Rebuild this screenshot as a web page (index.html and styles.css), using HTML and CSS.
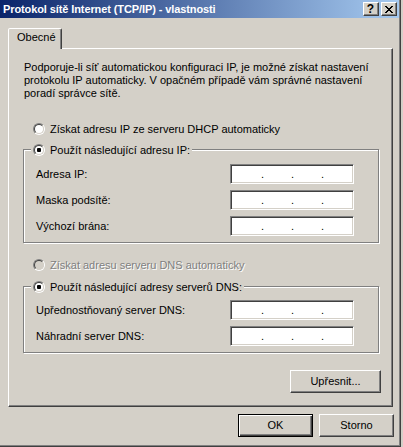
FILE: index.html
```html
<!DOCTYPE html>
<html>
<head>
<meta charset="utf-8">
<link rel="stylesheet" href="styles.css">
</head>
<body>
<div class="window">
  <div class="titlebar">
    <span class="title">Protokol sítě Internet (TCP/IP) - vlastnosti</span>
    <div class="tbuttons">
      <span class="tbtn help">?</span>
      <span class="tbtn close"><svg width="8" height="7" viewBox="0 0 8 7"><path d="M0 0h2v1H0zM6 0h2v1H6zM1 1h2v1H1zM5 1h2v1H5zM2 2h4v1H2zM3 3h2v1H3zM2 4h4v1H2zM1 5h2v1H1zM5 5h2v1H5zM0 6h2v1H0zM6 6h2v1H6z" fill="#000"/></svg></span>
    </div>
  </div>
  <div class="tabs"><div class="tab">Obecné</div></div>
  <div class="panel">
    <p class="intro">Podporuje-li síť automatickou konfiguraci IP, je možné získat nastavení<br>protokolu IP automaticky. V opačném případě vám správné nastavení<br>poradí správce sítě.</p>
    <div class="option opt-dhcp"><span class="radio"><span class="radio-in"></span></span><span>Získat adresu IP ze serveru DHCP automaticky</span></div>
    <div class="group group-ip">
      <div class="legend"><span class="radio checked"><span class="radio-in"></span></span><span>Použít následující adresu IP:</span></div>
      <div class="fields fields-ip">
        <span class="label">Adresa IP:</span>
        <div class="ip"><span class="seg s1"></span><span class="dot">.</span><span class="seg"></span><span class="dot">.</span><span class="seg"></span><span class="dot">.</span><span class="seg"></span></div>
        <span class="label">Maska podsítě:</span>
        <div class="ip"><span class="seg s1"></span><span class="dot">.</span><span class="seg"></span><span class="dot">.</span><span class="seg"></span><span class="dot">.</span><span class="seg"></span></div>
        <span class="label">Výchozí brána:</span>
        <div class="ip"><span class="seg s1"></span><span class="dot">.</span><span class="seg"></span><span class="dot">.</span><span class="seg"></span><span class="dot">.</span><span class="seg"></span></div>
      </div>
    </div>
    <div class="option opt-dns disabled"><span class="radio"><span class="radio-in"></span></span><span>Získat adresu serveru DNS automaticky</span></div>
    <div class="group group-dns">
      <div class="legend"><span class="radio checked"><span class="radio-in"></span></span><span>Použít následující adresy serverů DNS:</span></div>
      <div class="fields fields-dns">
        <span class="label">Upřednostňovaný server DNS:</span>
        <div class="ip"><span class="seg s1"></span><span class="dot">.</span><span class="seg"></span><span class="dot">.</span><span class="seg"></span><span class="dot">.</span><span class="seg"></span></div>
        <span class="label">Náhradní server DNS:</span>
        <div class="ip"><span class="seg s1"></span><span class="dot">.</span><span class="seg"></span><span class="dot">.</span><span class="seg"></span><span class="dot">.</span><span class="seg"></span></div>
      </div>
    </div>
    <div class="btn btn-advanced">Upřesnit...</div>
  </div>
  <div class="footer">
    <div class="btn default">OK</div>
    <div class="btn">Storno</div>
  </div>
</div>
</body>
</html>
```

FILE: styles.css
```css
* { box-sizing: border-box; }
html, body { margin: 0; padding: 0; }
body {
  background: #D4D0C8;
  font: 11px/13px "Liberation Sans", Arial, sans-serif;
  color: #000;
  width: 403px;
  height: 447px;
  overflow: hidden;
}
.window {
  width: 401px;
  height: 447px;
  border-right: 1px solid #404040;
  border-bottom: 1px solid #404040;
  padding: 0 1px 1px 0;
  box-shadow: inset -1px -1px #808080;
  display: flex;
  flex-direction: column;
}
.titlebar {
  height: 18px;
  flex: none;
  background: linear-gradient(to right, #0A246A, #A6CAF0);
  display: flex;
  align-items: center;
  justify-content: space-between;
  padding: 0 2px 0 3px;
}
.title {
  color: #fff;
  font-weight: bold;
  letter-spacing: -0.1px;
  white-space: nowrap;
}
.tbuttons { display: flex; gap: 2px; }
.tbtn {
  width: 16px;
  height: 14px;
  background: #D4D0C8;
  border: 1px solid;
  border-color: #fff #404040 #404040 #fff;
  box-shadow: inset -1px -1px #808080;
  display: flex;
  align-items: center;
  justify-content: center;
}
.help {
  font: bold 12px/12px "Liberation Sans", Arial, sans-serif;
  padding-right: 1px;
}
.close svg { display: block; }
.tabs {
  margin-top: 10px;
  padding-left: 8px;
  height: 21px;
  display: flex;
  flex: none;
}
.tab {
  width: 54px;
  height: 21px;
  background: #D4D0C8;
  border: 1px solid;
  border-bottom: none;
  border-color: #fff #404040 transparent #fff;
  border-radius: 2px 2px 0 0;
  box-shadow: inset -1px 0 #808080;
  padding-left: 8px;
  line-height: 17px;
  position: relative;
  z-index: 1;
}
.panel {
  margin: -1px 6px 0 8px;
  height: 359px;
  flex: none;
  border: 1px solid;
  border-color: #fff #404040 #404040 #fff;
  box-shadow: inset -1px -1px #808080;
  padding-top: 12px;
  display: flex;
  flex-direction: column;
}
.intro {
  margin: 0 0 0 15px;
  white-space: nowrap;
}
.option {
  display: flex;
  align-items: center;
  height: 14px;
  margin-left: 24px;
  white-space: nowrap;
}
.opt-dhcp { margin-top: 22px; }
.opt-dns { margin-top: 15px; }
.disabled { color: #808080; text-shadow: 1px 1px #fff; }
.radio {
  flex: none;
  width: 12px;
  height: 12px;
  border-radius: 50%;
  border: 1px solid;
  border-color: #808080 #fff #fff #808080;
  margin-right: 5px;
}
.radio-in {
  display: flex;
  align-items: center;
  justify-content: center;
  width: 10px;
  height: 10px;
  border-radius: 50%;
  border: 1px solid;
  border-color: #404040 #D4D0C8 #D4D0C8 #404040;
  background: #fff;
}
.disabled .radio-in { background: #D4D0C8; }
.checked .radio-in::after {
  content: "";
  width: 4px;
  height: 4px;
  background: #000;
  border-radius: 1px;
}
.group {
  margin-left: 14px;
  width: 356px;
  border: 1px solid #808080;
  box-shadow: inset 1px 1px #fff, 1px 1px #fff;
  display: flex;
  flex-direction: column;
  padding-bottom: 6px;
}
.group-ip { margin-top: 13px; }
.group-dns { margin-top: 14px; }
.legend {
  align-self: flex-start;
  display: flex;
  align-items: center;
  height: 14px;
  line-height: 14px;
  margin: -7px 0 0 7px;
  padding: 0 2px;
  background: #D4D0C8;
  white-space: nowrap;
}
.fields {
  display: grid;
  grid-template-columns: 194px 124px;
  grid-auto-rows: 20px;
  row-gap: 6px;
  align-items: center;
  padding-left: 12px;
}
.fields-ip { margin-top: 7px; }
.fields-dns { margin-top: 6px; }
.label { white-space: nowrap; }
.ip {
  height: 20px;
  background: #fff;
  border: 1px solid;
  border-color: #808080 #fff #fff #808080;
  box-shadow: inset 1px 1px #404040, inset -1px -1px #D4D0C8;
  display: flex;
  align-items: center;
  padding-left: 1px;
}
.seg { width: 27px; height: 13px; }
.seg.s1 { width: 29px; }
.dot { width: 3px; text-align: center; }
.btn {
  width: 75px;
  height: 23px;
  flex: none;
  border: 1px solid;
  border-color: #fff #404040 #404040 #fff;
  box-shadow: inset -1px -1px #808080;
  display: flex;
  align-items: center;
  justify-content: center;
  white-space: nowrap;
}
.btn.default {
  border-color: #000;
  box-shadow: inset 1px 1px #fff, inset -1px -1px #404040, inset -2px -2px #808080;
}
.btn-advanced {
  width: 91px;
  align-self: flex-end;
  margin: 17px 11px 0 0;
}
.footer {
  display: flex;
  justify-content: flex-end;
  gap: 6px;
  margin-top: 7px;
  padding-right: 5px;
}
```
